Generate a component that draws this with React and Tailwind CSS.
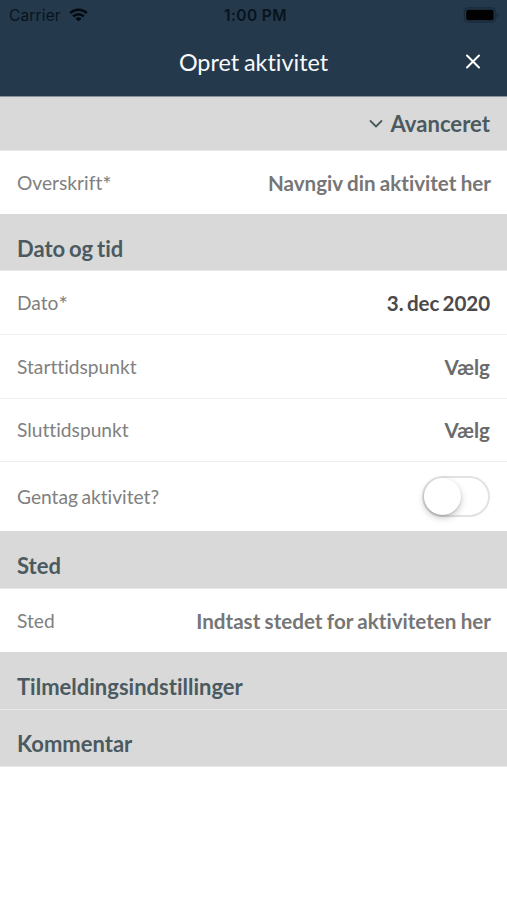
const LABEL = "text-[19.2px] leading-6 [word-spacing:-1.5px] text-[#808080] whitespace-nowrap";
const VALUE = "text-[20.6px] leading-6 font-bold whitespace-nowrap";

function Section({ title, className = "" }) {
  return (
    <div className={`flex w-full items-end border-b border-[#e8e9e9] bg-[#d9d9d9] px-[17px] ${className}`}>
      <h2 className="text-[22px] leading-7 font-bold [word-spacing:-1.5px] whitespace-nowrap text-[#4b5a60]">{title}</h2>
    </div>
  );
}

function Row({ label, required = false, className = "", children }) {
  return (
    <div className={`flex w-full items-center justify-between bg-white px-[17px] ${className}`}>
      <span className={LABEL}>
        {label}
        {required && <span className="align-[-2px] text-[22px] leading-none">*</span>}
      </span>
      {children}
    </div>
  );
}

function StatusBar() {
  return (
    <div className="grid h-[30px] grid-cols-3 items-center pr-2 pl-[9px] font-['Inter','Liberation_Sans',sans-serif] text-[#08131d]">
      <div className="flex items-center gap-2">
        <span className="pt-px text-[15.5px] leading-5 tracking-[0.15px]">Carrier</span>
        <svg width="19" height="14" viewBox="0 0 19 14" fill="none" stroke="#030a10" strokeWidth="2.5">
          <path d="M1.2 5.1a11.8 11.8 0 0 1 16.6 0" />
          <path d="M4.1 8.4a7.7 7.7 0 0 1 10.8 0" />
          <path d="M6.4 10.5a4.4 4.4 0 0 1 6.2 0L9.5 13.6Z" fill="#030a10" stroke="none" />
        </svg>
      </div>
      <span className="pt-px pl-[3px] text-center text-[15.5px] leading-5 font-semibold tracking-[0.4px] whitespace-nowrap">1:00 PM</span>
      <svg className="justify-self-end" width="37" height="16" viewBox="0 0 37 16">
        <rect x="2.4" y="0.9" width="31" height="14.2" rx="4" fill="none" stroke="#182b3a" strokeWidth="1.4" />
        <rect x="4.2" y="2.7" width="27.4" height="10.6" rx="2" fill="#000" />
        <path d="M34.7 5.5c2.4.7 2.4 4.3 0 5Z" fill="#182b3a" />
      </svg>
    </div>
  );
}

export default function App() {
  return (
    <div className="flex h-[900px] w-[507px] flex-col overflow-hidden bg-white font-['Lato','Open_Sans',sans-serif] [font-variant-ligatures:none]">
      <header className="h-[97px] shrink-0 border-b border-[#8a939b] bg-[#24394c]">
        <StatusBar />
        <div className="grid h-16 grid-cols-[1fr_auto_1fr] items-center px-[17px]">
          <span />
          <h1 className="text-[23.4px] leading-7 [word-spacing:-1.2px] whitespace-nowrap text-[#f8fafb]">Opret aktivitet</h1>
          <button aria-label="Luk" className="mr-[9px] justify-self-end">
            <svg width="16" height="16" viewBox="0 0 16 16" fill="none" stroke="#fff" strokeWidth="2" strokeLinecap="round">
              <path d="M2 1.5l12 12M14 1.5L2 13.5" />
            </svg>
          </button>
        </div>
      </header>

      <button className="flex h-[54px] shrink-0 items-center justify-end gap-[7px] border-b border-[#e8e9e9] bg-[#d9d9d9] pr-[17px]">
        <svg width="14" height="10" viewBox="0 0 14 10" fill="none" stroke="#4b5a60" strokeWidth="1.8" strokeLinecap="round" strokeLinejoin="round">
          <path d="M1.5 2l5.5 5.5L12.5 2" />
        </svg>
        <span className="text-[22.1px] leading-7 font-bold text-[#4b5a60]">Avanceret</span>
      </button>

      <Row label="Overskrift" required className="h-[63px] shrink-0">
        <span className={`${VALUE} -mr-px [word-spacing:-0.7px] text-[#767676]`}>Navngiv din aktivitet her</span>
      </Row>

      <Section title="Dato og tid" className="h-[57px] shrink-0 pb-[7px]" />
      <Row label="Dato" required className="h-16 shrink-0 border-b border-[#eceeef]">
        <span className={`${VALUE} tracking-[-0.1px] [word-spacing:-1.5px] text-[#4a4a4a]`}>3. dec 2020</span>
      </Row>
      <Row label="Starttidspunkt" className="h-16 shrink-0 border-b border-[#eceeef]">
        <span className={`${VALUE} text-[#6b6b6b]`}>Vælg</span>
      </Row>
      <Row label="Sluttidspunkt" className="h-[63px] shrink-0 border-b border-[#eceeef]">
        <span className={`${VALUE} text-[#6b6b6b]`}>Vælg</span>
      </Row>
      <Row label="Gentag aktivitet?" className="h-[69px] shrink-0">
        <button
          role="switch"
          aria-checked="false"
          aria-label="Gentag aktivitet?"
          className="flex h-[41px] w-[68px] items-center rounded-full border-2 border-[#e2e2e2] bg-white"
        >
          <span className="h-[37px] w-[37px] rounded-full bg-white shadow-[0_3px_7px_rgba(0,0,0,0.22),0_1px_2px_rgba(0,0,0,0.15)]" />
        </button>
      </Row>

      <Section title="Sted" className="h-[58px] shrink-0 pb-2" />
      <Row label="Sted" className="h-[63px] shrink-0">
        <span className={`${VALUE} -mr-px [word-spacing:-0.7px] text-[#767676]`}>Indtast stedet for aktiviteten her</span>
      </Row>

      <Section title="Tilmeldingsindstillinger" className="h-[58px] shrink-0 pb-2" />
      <Section title="Kommentar" className="h-[57px] shrink-0 pb-2" />
    </div>
  );
}
